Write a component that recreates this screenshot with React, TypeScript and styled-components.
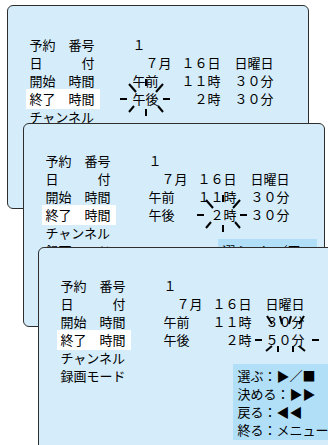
import React from 'react';
import styled, { createGlobalStyle, css } from 'styled-components';

const GlobalStyle = createGlobalStyle`
  html, body {
    margin: 0;
    padding: 0;
    background: #fff;
  }
  body {
    font-family: "Noto Sans CJK JP", "Noto Sans", sans-serif;
  }
`;

type Target = 'ampm' | 'hour' | 'minute';

const screens: { shift: number; top: number; pad: number; blink: Target; endMin: string }[] = [
  { shift: 0, top: 0, pad: 29.5, blink: 'ampm', endMin: '３０分' },
  { shift: 16, top: -86, pad: 27.5, blink: 'hour', endMin: '３０分' },
  { shift: 31, top: -80, pad: 28.5, blink: 'minute', endMin: '５０分' },
];

function App() {
  return (
    <>
      <GlobalStyle />
      <Stage>
        {screens.map((s, i) => (
          <Screen key={i} $shift={s.shift} $top={s.top} $pad={s.pad}>
            <Rows>
              <Row>
                <Label>予約　番号</Label>
                <Cell>１</Cell>
              </Row>
              <Row>
                <Label>日　　　付</Label>
                <Cell>　７月</Cell>
                <Hour>１６日</Hour>
                <Cell>日曜日</Cell>
              </Row>
              <Row>
                <Label>開始　時間</Label>
                <Cell>午前</Cell>
                <Hour>１１時</Hour>
                <Cell>３０分</Cell>
              </Row>
              <Row>
                <Label $on>終了　時間</Label>
                <Cell>{s.blink === 'ampm' ? <Blink w={26}>午後</Blink> : '午後'}</Cell>
                <Hour>{s.blink === 'hour' ? <Blink w={26}>２時</Blink> : '２時'}</Hour>
                <Cell>{s.blink === 'minute' ? <Blink w={39} wide>{s.endMin}</Blink> : s.endMin}</Cell>
              </Row>
              <Row>
                <Label>チャンネル</Label>
              </Row>
              <Row>
                <Label>録画モード</Label>
              </Row>
            </Rows>
            <Help>
              <div>選ぶ：▶／■</div>
              <div>決める：▶▶</div>
              <div>戻る：◀◀</div>
              <div>終る：メニュー</div>
            </Help>
          </Screen>
        ))}
      </Stage>
    </>
  );
}

// rays around the blinking value, coordinates relative to the text box (cy = row middle)
function Blink({ children, w, wide }: { children: React.ReactNode; w: number; wide?: boolean }) {
  const lines: number[][] = wide
    ? [
        [-11, 0, -4, 0], [w + 7, 0, w + 14, 0],
        [1, -24, 6, -16], [14, -24, 16, -16], [25, -24, 23, -16], [w - 1, -24, w - 6, -16],
        [6, 6, 0, 11], [12, 6, 12, 12], [27, 6, 27, 12], [w - 6, 6, w, 11],
      ]
    : [
        [-13, 0, -6, 0], [w + 4, 0, w + 11, 0],
        [w / 2, -20, w / 2, -13], [w / 2, 10, w / 2, 17],
        [-4, -15, 3, -7], [w + 4, -15, w - 3, -7],
        [1, 7, -4, 13], [w - 1, 7, w + 4, 13],
      ];
  return (
    <BlinkWrap>
      {children}
      <Rays width={w + 60} height={78} viewBox={`-30 -30 ${w + 60} 78`}>
        {lines.map(([x1, y1, x2, y2], i) => (
          <line key={i} x1={x1} y1={y1 + 9} x2={x2} y2={y2 + 9} stroke="#000" strokeWidth={2} />
        ))}
      </Rays>
    </BlinkWrap>
  );
}

export default App;

const Stage = styled.div`
  box-sizing: border-box;
  width: 328px;
  height: 445px;
  overflow: hidden;
  padding: 5px 0 0 7px;
  display: flex;
  flex-direction: column;
  align-items: flex-start;
`;

const Screen = styled.section<{ $shift: number; $top: number; $pad: number }>`
  position: relative;
  box-sizing: border-box;
  flex-shrink: 0;
  width: 302px;
  height: 204px;
  margin-left: ${p => p.$shift}px;
  margin-top: ${p => p.$top}px;
  padding: ${p => p.$pad}px 0 0 21.5px;
  background: #d5edfa;
  border: 1.5px solid #2e2e2e;
  border-radius: 6px;
  display: flex;
  flex-direction: column;
  align-items: flex-start;
  color: #000;
  font-size: 13px;
  line-height: 18px;
`;

const Rows = styled.div`
  display: flex;
  flex-direction: column;
`;

const Row = styled.div`
  display: grid;
  grid-template-columns: 103px 49px 53px auto;
  height: 18px;
  white-space: pre;
`;

const Label = styled.span<{ $on?: boolean }>`
  justify-self: start;
  ${p =>
    p.$on &&
    css`
      background: #fff;
      margin: -1px 0 -1px -4px;
      padding: 1px 5px 1px 4px;
    `}
`;

const Cell = styled.span``;

const Hour = styled.span`
  width: 39px;
  text-align: right;
`;

const BlinkWrap = styled.span`
  position: relative;
  display: inline-block;
`;

const Rays = styled.svg`
  position: absolute;
  left: -30px;
  top: -30px;
  overflow: visible;
  pointer-events: none;
`;

const Help = styled.div`
  box-sizing: border-box;
  width: 99px;
  margin: -21px 0 0 172px;
  padding: 3px 0 1px 5px;
  background: #b0dff7;
  white-space: nowrap;
  overflow: hidden;
`;
